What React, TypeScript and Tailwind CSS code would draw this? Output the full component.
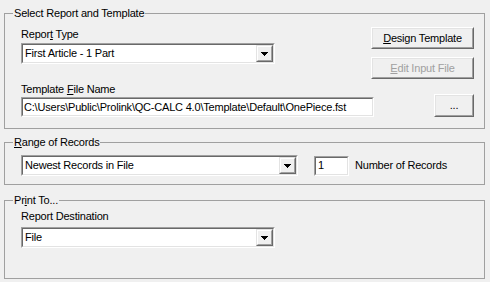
import type { ReactNode } from 'react';

const Arrow = () => (
  <svg width="7" height="4" viewBox="0 0 7 4" shapeRendering="crispEdges">
    <rect x="0" y="0" width="7" height="1" fill="#000" />
    <rect x="1" y="1" width="5" height="1" fill="#000" />
    <rect x="2" y="2" width="3" height="1" fill="#000" />
    <rect x="3" y="3" width="1" height="1" fill="#000" />
  </svg>
);

const Sunken = ({ className, children }: { className: string; children: ReactNode }) => (
  <div className={`border border-t-[#a0a0a0] border-l-[#a0a0a0] border-r-white border-b-white ${className}`}>
    <div className="flex h-full items-center border border-t-[#696969] border-l-[#696969] border-r-[#e3e3e3] border-b-[#e3e3e3] bg-white">
      {children}
    </div>
  </div>
);

const Combo = ({ value, className }: { value: string; className: string }) => (
  <Sunken className={`h-[21px] ${className}`}>
    <span className="flex-1 pl-[2px] whitespace-nowrap">{value}</span>
    <div className="h-full w-[17px] border border-t-[#e3e3e3] border-l-[#e3e3e3] border-r-[#696969] border-b-[#696969] bg-[#f0f0f0]">
      <div className="flex h-full items-center justify-center border border-t-white border-l-white border-r-[#a0a0a0] border-b-[#a0a0a0]">
        <Arrow />
      </div>
    </div>
  </Sunken>
);

const Button = ({ children, className, disabled }: { children: ReactNode; className: string; disabled?: boolean }) => (
  <button
    className={`border border-t-white border-l-white border-r-[#696969] border-b-[#696969] bg-[#f0f0f0] p-0 ${className}`}
  >
    <div
      className={`flex h-full items-center justify-center border border-t-[#e3e3e3] border-l-[#e3e3e3] border-r-[#a0a0a0] border-b-[#a0a0a0] ${
        disabled ? 'text-[#a0a0a0]' : 'text-black'
      }`}
    >
      {children}
    </div>
  </button>
);

// group box: legend sits on the top border
const Group = ({ title, className, children }: { title: ReactNode; className: string; children: ReactNode }) => (
  <fieldset className={`border border-[#a0a0a0] ${className}`}>
    <legend className="ml-[8px] px-[1px] leading-[13px]">{title}</legend>
    <div className="pl-[16px]">{children}</div>
  </fieldset>
);

export default function App() {
  return (
    <div className="flex h-[282px] w-[490px] flex-col bg-[#f0f0f0] pt-[7px] pr-[5px] pl-[4px] font-['Liberation_Sans',Arial,sans-serif] text-[11px] leading-[13px] tracking-[-0.2px] text-black">
      <Group title="Select Report and Template" className="pr-[10px] pb-[11px]">
        <div className="flex justify-between">
          <div className="flex flex-col">
            <div className="mt-[8px]">
              Repor<u>t</u> Type
            </div>
            <Combo value="First Article - 1 Part" className="mt-[2px] w-[254px]" />
          </div>
          <div className="flex flex-col">
            <Button className="mt-[7px] h-[22px] w-[103px]">
              <span>
                <u>D</u>esign Template
              </span>
            </Button>
            <Button className="mt-[8px] h-[22px] w-[103px]" disabled>
              <span>
                <u>E</u>dit Input File
              </span>
            </Button>
          </div>
        </div>
        <div className="flex items-end justify-between">
          <div className="flex flex-col">
            <div className="mt-[4px]">
              Template <u>F</u>ile Name
            </div>
            <Sunken className="mt-[1px] h-[20px] w-[353px]">
              <span className="pl-[1px] whitespace-nowrap">
                {'C:\\Users\\Public\\Prolink\\QC-CALC 4.0\\Template\\Default\\OnePiece.fst'}
              </span>
            </Sunken>
          </div>
          <Button className="h-[23px] w-[40px]">...</Button>
        </div>
      </Group>

      <Group
        title={
          <>
            <u>R</u>ange of Records
          </>
        }
        className="mt-[7px] pb-[8px]"
      >
        <div className="mt-[6px] flex items-center">
          <Combo value="Newest Records in File" className="w-[277px]" />
          <Sunken className="ml-[16px] h-[20px] w-[35px]">
            <span className="pl-[2px]">1</span>
          </Sunken>
          <span className="ml-[6px]">Number of Records</span>
        </div>
      </Group>

      <Group
        title={
          <>
            Pr<u>i</u>nt To...
          </>
        }
        className="mt-[9px] h-[85px]"
      >
        <div className="mt-[3px]">Report Destination</div>
        <Combo value="File" className="mt-[4px] w-[254px]" />
      </Group>
    </div>
  );
}
